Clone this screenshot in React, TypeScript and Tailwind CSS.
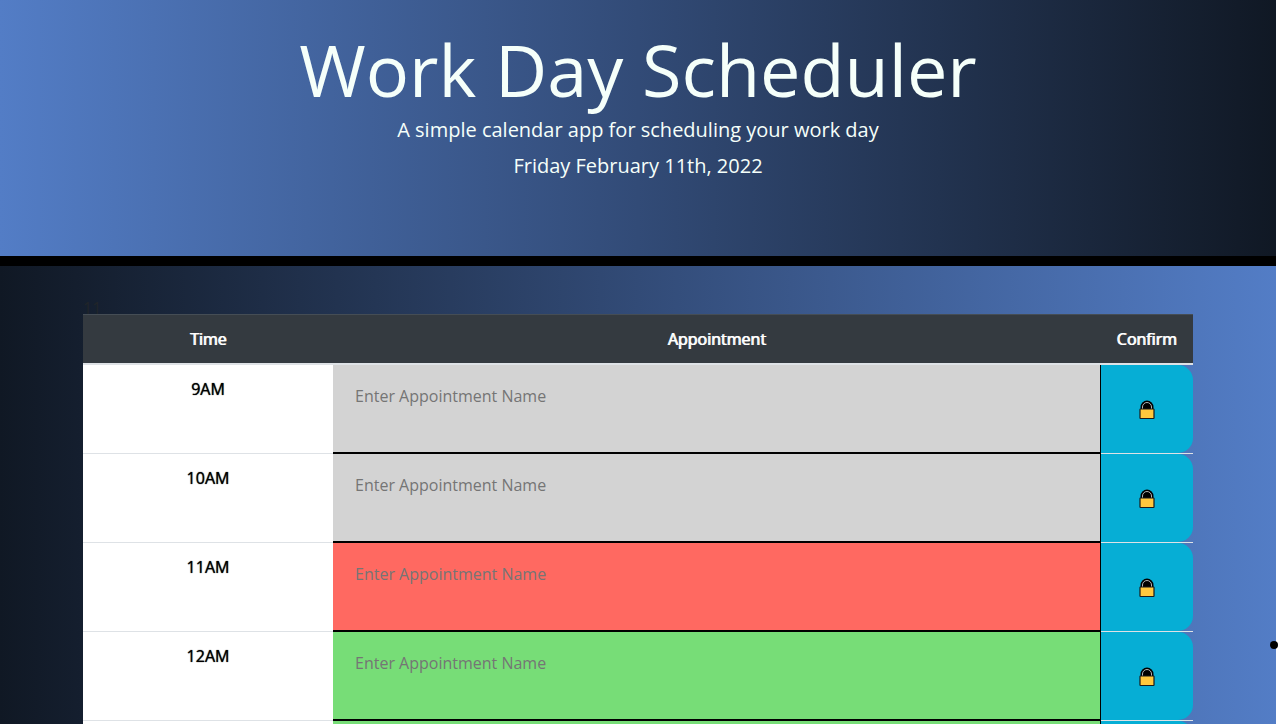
const slots = [
  { time: "9AM", tone: "bg-[#d3d3d3]" },
  { time: "10AM", tone: "bg-[#d3d3d3]" },
  { time: "11AM", tone: "bg-[#ff6961]" },
  { time: "12AM", tone: "bg-[#77dd77]" },
  { time: "1PM", tone: "bg-[#77dd77]" },
];

function LockIcon() {
  return (
    <svg width="16" height="20" viewBox="0 0 16 20" aria-hidden="true">
      <path d="M1.500 9V7a6.500 6.500 0 0 1 13 0v2z" fill="#000" />
      <path d="M3.500 9.500V7a4.500 4.500 0 0 1 9 0v2.500" fill="#000" stroke="#b4b4b4" strokeWidth="1" />
      <rect x="1" y="9" width="14" height="9.500" rx="0.500" fill="#ffc83d" stroke="#1a1a1a" strokeWidth="1.200" />
    </svg>
  );
}

export default function App() {
  return (
    <div className="h-screen overflow-x-hidden overflow-y-auto bg-white pr-0.5 font-['Open_Sans','Noto_Sans',sans-serif] text-base text-[#212529] [scrollbar-width:none]">
      <div className="relative flex min-h-full flex-col">
        <header className="shrink-0 border-b-10 border-black bg-linear-[90deg,#537dc6,#324b77_50%,#101824] px-4 pt-7 pb-18 text-center text-[#f5fffa]">
          <h1 className="pb-1 text-[72px] leading-[82px] font-normal">Work Day Scheduler</h1>
          <p className="-mt-0.5 text-xl leading-9">A simple calendar app for scheduling your work day</p>
          <p className="text-xl leading-9">Friday February 11th, 2022</p>
        </header>
        <main className="grow bg-linear-[90deg,#101824,#324b77_50%,#537dc6] pt-6">
          <div className="mx-auto max-w-[1140px] px-[15px]">
            <p className="h-6 pt-1 leading-7">11</p>
            <table className="w-full table-fixed border-collapse">
              <colgroup>
                <col className="w-[250px]" />
                <col />
                <col className="w-[93px]" />
              </colgroup>
              <thead>
                <tr className="h-[49px] border-t border-b-2 border-t-[#454d55] border-b-[#dee2e6] bg-[#343a40] text-center text-white [text-shadow:1px_0_currentColor]">
                  <th scope="col" className="font-normal">Time</th>
                  <th scope="col" className="font-normal">Appointment</th>
                  <th scope="col" className="font-normal">Confirm</th>
                </tr>
              </thead>
              <tbody>
                {slots.map(({ time, tone }) => (
                  <tr key={time} className="h-[89px]">
                    <th scope="row" className="border-b border-[#dee2e6] bg-white pt-3 text-center align-top font-medium text-black [text-shadow:0_0_1px_currentColor]">
                      {time}
                    </th>
                    <td className={`border-r border-b-2 border-black p-0 align-top ${tone}`}>
                      <textarea
                        aria-label={`Appointment at ${time}`}
                        placeholder="Enter Appointment Name"
                        className="block h-[86px] w-full resize-none px-[22px] pt-[19px] text-black outline-none placeholder:text-[#757575]"
                      />
                    </td>
                    <td className="h-[89px] border-b border-[#dee2e6] p-0">
                      <button
                        type="button"
                        aria-label={`Save ${time} appointment`}
                        className="flex h-[88px] w-full items-center justify-center rounded-r-[15px] bg-[#06aed5] pt-0.5"
                      >
                        <LockIcon />
                      </button>
                    </td>
                  </tr>
                ))}
              </tbody>
            </table>
          </div>
        </main>
        <span className="absolute top-[641px] -right-0.5 size-2 rounded-full bg-black" />
      </div>
    </div>
  );
}
